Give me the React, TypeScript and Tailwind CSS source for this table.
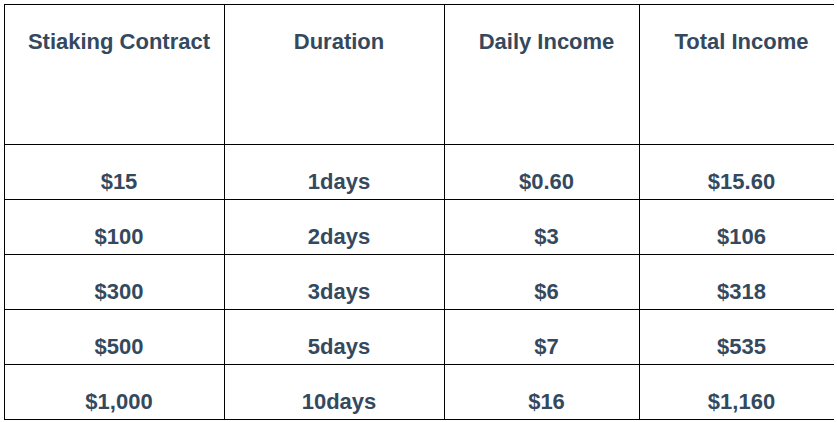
const headers = ["Stiaking Contract", "Duration", "Daily Income", "Total Income"];

const rows = [
  ["$15", "1days", "$0.60", "$15.60"],
  ["$100", "2days", "$3", "$106"],
  ["$300", "3days", "$6", "$318"],
  ["$500", "5days", "$7", "$535"],
  ["$1,000", "10days", "$16", "$1,160"],
];

export default function App() {
  return (
    <div className="min-h-screen bg-white p-1 font-['Liberation_Sans',Arial,sans-serif] text-[22px] font-bold leading-[25px] text-[#34495e]">
      <div className="grid w-[830px] grid-cols-[220px_220px_195px_195px] border-b border-black">
        {headers.map((h) => (
          <div key={h} className="h-[140px] border-l border-t border-black pl-[9px] pt-[24px] text-center">
            {h}
          </div>
        ))}
        {rows.map((row, i) =>
          row.map((cell, j) => (
            <div key={`${i}-${j}`} className="h-[55px] border-l border-t border-black pl-[9px] pt-[24px] text-center">
              {cell}
            </div>
          ))
        )}
      </div>
    </div>
  );
}
